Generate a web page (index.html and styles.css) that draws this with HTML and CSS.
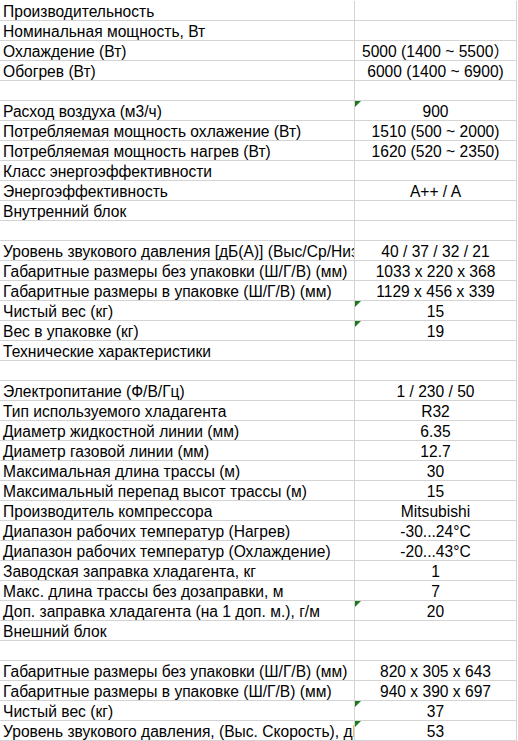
FILE: index.html
```html
<!DOCTYPE html>
<html lang="ru">
<head>
<meta charset="utf-8">
<title>Характеристики</title>
<link rel="stylesheet" href="styles.css">
</head>
<body>
<div class="sheet">
  <div class="c k">Производительность</div><div class="c v"></div>
  <div class="c k">Номинальная мощность, Вт</div><div class="c v"></div>
  <div class="c k">Охлаждение (Вт)</div><div class="c v">5000 (1400 ~ 5500）</div>
  <div class="c k">Обогрев (Вт)</div><div class="c v">6000 (1400 ~ 6900)</div>
  <div class="c k"></div><div class="c v"></div>
  <div class="c k">Расход воздуха (м3/ч)</div><div class="c v flag">900</div>
  <div class="c k">Потребляемая мощность охлажение (Вт)</div><div class="c v">1510 (500 ~ 2000)</div>
  <div class="c k">Потребляемая мощность нагрев (Вт)</div><div class="c v">1620 (520 ~ 2350)</div>
  <div class="c k">Класс энергоэффективности</div><div class="c v"></div>
  <div class="c k">Энергоэффективность</div><div class="c v">A++ / A</div>
  <div class="c k">Внутренний блок</div><div class="c v"></div>
  <div class="c k"></div><div class="c v"></div>
  <div class="c k">Уровень звукового давления [дБ(А)] (Выс/Ср/Низ)</div><div class="c v">40 / 37 / 32 / 21</div>
  <div class="c k">Габаритные размеры без упаковки (Ш/Г/В) (мм)</div><div class="c v">1033 x 220 x 368</div>
  <div class="c k">Габаритные размеры в упаковке (Ш/Г/В) (мм)</div><div class="c v">1129 x 456 x 339</div>
  <div class="c k">Чистый вес (кг)</div><div class="c v flag">15</div>
  <div class="c k">Вес в упаковке (кг)</div><div class="c v flag">19</div>
  <div class="c k">Технические характеристики</div><div class="c v"></div>
  <div class="c k"></div><div class="c v"></div>
  <div class="c k">Электропитание (Ф/В/Гц)</div><div class="c v">1 / 230 / 50</div>
  <div class="c k">Тип используемого хладагента</div><div class="c v">R32</div>
  <div class="c k">Диаметр жидкостной линии (мм)</div><div class="c v">6.35</div>
  <div class="c k">Диаметр газовой линии (мм)</div><div class="c v">12.7</div>
  <div class="c k">Максимальная длина трассы (м)</div><div class="c v">30</div>
  <div class="c k">Максимальный перепад высот трассы (м)</div><div class="c v">15</div>
  <div class="c k">Производитель компрессора</div><div class="c v">Mitsubishi</div>
  <div class="c k">Диапазон рабочих температур (Нагрев)</div><div class="c v">-30...24°C</div>
  <div class="c k">Диапазон рабочих температур (Охлаждение)</div><div class="c v">-20...43°C</div>
  <div class="c k">Заводская заправка хладагента, кг</div><div class="c v">1</div>
  <div class="c k">Макс. длина трассы без дозаправки, м</div><div class="c v">7</div>
  <div class="c k">Доп. заправка хладагента (на 1 доп. м.), г/м</div><div class="c v flag">20</div>
  <div class="c k">Внешний блок</div><div class="c v"></div>
  <div class="c k"></div><div class="c v"></div>
  <div class="c k">Габаритные размеры без упаковки (Ш/Г/В) (мм)</div><div class="c v">820 x 305 x 643</div>
  <div class="c k">Габаритные размеры в упаковке (Ш/Г/В) (мм)</div><div class="c v">940 x 390 x 697</div>
  <div class="c k">Чистый вес (кг)</div><div class="c v flag">37</div>
  <div class="c k">Уровень звукового давления, (Выс. Скорость), дБ(А)</div><div class="c v flag">53</div>
</div>
</body>
</html>
```
FILE: styles.css
```css
html, body {
  margin: 0;
  padding: 0;
  background: #ffffff;
}
body {
  width: 518px;
  height: 741px;
  overflow: hidden;
}
.sheet {
  display: grid;
  grid-template-columns: 355px 162px;
  grid-auto-rows: 20px;
  padding-top: 1px;
  font-family: "Liberation Sans", Arial, "Noto Sans CJK SC", sans-serif;
  font-size: 15.6px;
  color: #000000;
}
.c {
  box-sizing: border-box;
  height: 20px;
  border-right: 1px solid #d4d4d4;
  border-bottom: 1px solid #d4d4d4;
  line-height: 21px;
  white-space: nowrap;
  overflow: hidden;
  position: relative;
}
.k {
  padding-left: 3px;
}
.v {
  text-align: center;
}
.flag::before {
  content: "";
  position: absolute;
  left: 0;
  top: 0;
  width: 0;
  height: 0;
  border-top: 6px solid #1e7b1e;
  border-right: 6px solid transparent;
}
```
